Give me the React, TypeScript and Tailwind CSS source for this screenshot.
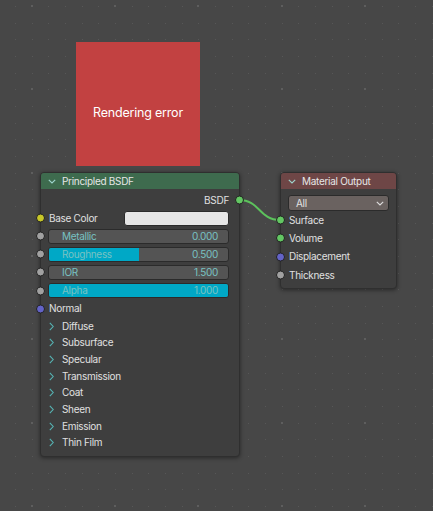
import React from "react";

const STEP = 50 / 3;

function DotGrid() {
  const dots: React.ReactNode[] = [];
  for (let i = 0; i < 28; i++) {
    for (let j = 0; j < 31; j++) {
      const x = Math.round(-1.667 + i * STEP);
      const y = Math.round(6 + j * STEP);
      const major = (i - 2) % 5 === 0 && j % 5 === 0;
      dots.push(
        major ? (
          <rect key={`${i}-${j}`} x={x - 1} y={y - 1} width={2} height={2} fill="#5e5e5e" />
        ) : (
          <rect key={`${i}-${j}`} x={x} y={y} width={1} height={1} fill="#575757" />
        )
      );
    }
  }
  return (
    <svg className="absolute inset-0" width={433} height={511}>
      {dots}
    </svg>
  );
}

function Socket({ color, side }: { color: string; side: "left" | "right" }) {
  return (
    <span
      className={`absolute top-1/2 -translate-y-1/2 w-[9px] h-[9px] rounded-full border-[0.5px] border-[#222222] ${
        side === "left" ? "left-[-5px]" : "right-[-5px]"
      }`}
      style={{ backgroundColor: color }}
    />
  );
}

function ChevronDown({ color }: { color: string }) {
  return (
    <svg width="8" height="5" viewBox="0 0 8 5" className="shrink-0">
      <path d="M0.8 0.8 L4 4 L7.2 0.8" fill="none" stroke={color} strokeWidth="1.1" />
    </svg>
  );
}

function ChevronRight() {
  return (
    <svg width="5" height="9" viewBox="0 0 5 9" className="shrink-0">
      <path d="M0.8 0.8 L4.2 4.5 L0.8 8.2" fill="none" stroke="#56b4b4" strokeWidth="1.1" />
    </svg>
  );
}

function Slider({ label, value, fill }: { label: string; value: string; fill: number }) {
  return (
    <div className="relative h-[18.2px] flex items-center">
      <Socket color="#a1a1a1" side="left" />
      <div className="relative ml-[7px] mr-[10px] flex-1 h-[15px] rounded-[3px] border border-[#2b2b2b] bg-[#545454] overflow-hidden">
        <div className="absolute inset-y-0 left-0 bg-[#00a8c6]" style={{ width: `${fill}%` }} />
        <div className="relative h-full flex items-center justify-between pl-[13px] pr-[10px] text-[10px] text-[#78c2c2]">
          <span>{label}</span>
          <span>{value}</span>
        </div>
      </div>
    </div>
  );
}

function PanelRow({ label }: { label: string }) {
  return (
    <div className="h-[16.67px] flex items-center pl-[8px] gap-[8px] text-[10px] text-[#e0e0e0]">
      <ChevronRight />
      <span>{label}</span>
    </div>
  );
}

function PrincipledNode() {
  return (
    <div className="absolute left-[40px] top-[172px] w-[200px] rounded-[4px] bg-[#3e3e3e] shadow-[0_1px_4px_rgba(0,0,0,0.45)] border border-[#2f2f2f]">
      <div className="h-[16px] rounded-t-[3px] bg-[#3e6b4e] flex items-center pl-[7px] gap-[6px] text-[10px] text-[#e6e6e6]">
        <ChevronDown color="#9fd6cf" />
        <span>Principled BSDF</span>
      </div>
      <div className="pt-[2px] pb-[5px]">
        <div className="relative h-[18px] flex items-center justify-end pr-[10px] text-[10px] text-[#e0e0e0]">
          <span>BSDF</span>
          <Socket color="#63c763" side="right" />
        </div>
        <div className="relative h-[18px] flex items-center text-[10px] text-[#e0e0e0]">
          <Socket color="#c7c729" side="left" />
          <span className="pl-[8px]">Base Color</span>
          <div className="ml-auto mr-[10px] w-[105px] h-[15px] rounded-[3px] border border-[#2b2b2b] bg-[#e6e6e6]" />
        </div>
        <Slider label="Metallic" value="0.000" fill={0} />
        <Slider label="Roughness" value="0.500" fill={50} />
        <Slider label="IOR" value="1.500" fill={0} />
        <Slider label="Alpha" value="1.000" fill={100} />
        <div className="relative h-[18px] flex items-center text-[10px] text-[#e0e0e0]">
          <Socket color="#6363c7" side="left" />
          <span className="pl-[8px]">Normal</span>
        </div>
        {["Diffuse", "Subsurface", "Specular", "Transmission", "Coat", "Sheen", "Emission", "Thin Film"].map((p) => (
          <PanelRow key={p} label={p} />
        ))}
      </div>
    </div>
  );
}

function OutputNode() {
  const inputs: [string, string][] = [
    ["Surface", "#63c763"],
    ["Volume", "#63c763"],
    ["Displacement", "#6363c7"],
    ["Thickness", "#a1a1a1"],
  ];
  return (
    <div className="absolute left-[280px] top-[172px] w-[117px] rounded-[4px] bg-[#3e3e3e] shadow-[0_1px_4px_rgba(0,0,0,0.45)] border border-[#2f2f2f]">
      <div className="h-[16px] rounded-t-[3px] bg-[#6e4646] flex items-center pl-[7px] gap-[6px] text-[10px] text-[#e6e6e6]">
        <ChevronDown color="#9fd6cf" />
        <span>Material Output</span>
      </div>
      <div className="pt-[6px] pb-[4px]">
        <div className="mx-[7px] h-[16px] rounded-[3px] border border-[#2b2b2b] bg-[#6a6260] flex items-center justify-between pl-[7px] pr-[4px] text-[10px] text-[#e2e2e2]">
          <span>All</span>
          <ChevronDown color="#dedede" />
        </div>
        {inputs.map(([label, color]) => (
          <div key={label} className="relative h-[18.3px] flex items-center pl-[8px] text-[10px] text-[#e0e0e0]">
            <Socket color={color} side="left" />
            <span>{label}</span>
          </div>
        ))}
      </div>
    </div>
  );
}

export default function App() {
  return (
    <div className="relative w-[433px] h-[511px] overflow-hidden bg-[#474747] font-['Inter','Noto_Sans',sans-serif] tracking-[-0.3px]">
      <DotGrid />
      <div className="absolute left-[76px] top-[42px] w-[124px] h-[124px] bg-[#c24141] flex items-center justify-center pt-[18px] text-[12.5px] tracking-[-0.2px] text-white">
        Rendering error
      </div>
      <svg className="absolute inset-0" width={433} height={511}>
        <path d="M239 200 C 260 200, 259 220, 280 220" fill="none" stroke="#5cc25c" strokeWidth="2" />
      </svg>
      <PrincipledNode />
      <OutputNode />
    </div>
  );
}
